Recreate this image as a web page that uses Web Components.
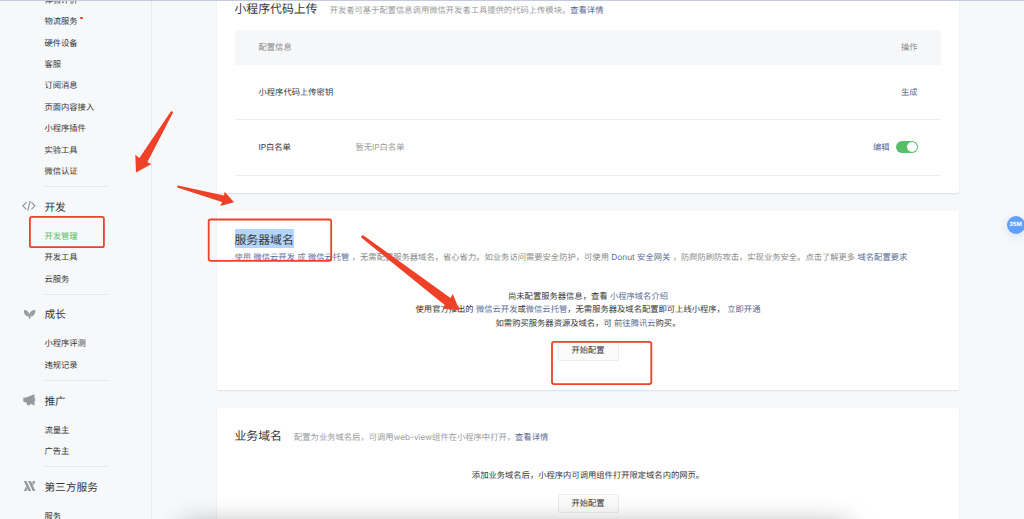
<!DOCTYPE html>
<html lang="zh-CN">
<head>
<meta charset="utf-8">
<title>开发管理</title>
<style>
html,body{margin:0;height:519px;overflow:hidden;background:#f6f8f9}
body{font:8.3px/14px Inter,"Noto Sans CJK SC",sans-serif;color:#353535;text-rendering:geometricPrecision}
</style>
</head>
<body>
<mp-app></mp-app>
<script>
const define = (name, html) => customElements.define(name, class extends HTMLElement {
  constructor() {
    super();
    const t = document.createElement('template');
    t.innerHTML = html;
    this.attachShadow({mode: 'open'}).append(t.content.cloneNode(true));
  }
});

define('nav-item', `<style>
:host{display:flex;align-items:center;box-sizing:border-box;height:21.4px;padding-top:1.6px;white-space:nowrap}
:host([active]){color:#5bc06b}
:host([dot])::after{content:"";width:2.6px;height:2.6px;border-radius:50%;background:#f0302a;margin:-8px 0 0 2.5px}
</style><slot></slot>`);

define('nav-group', `<style>
:host{display:block;padding:0 0 4.2px 44.4px}
header{display:flex;align-items:center;height:38.3px;margin-left:-23.700px}
.rule{width:65px;height:1px;background:#e8eaed}
.icon{width:23.7px;display:flex}
h3{margin:0;font:400 10.7px/16px Inter,"Noto Sans CJK SC",sans-serif;padding-top:3px;white-space:nowrap}
:host([plain]) header,:host([plain]) .rule{display:none}
</style><div class="rule"></div><header><span class="icon"><slot name="icon"></slot></span><h3><slot name="title"></slot></h3></header><slot></slot>`);

define('side-nav', `<style>
:host{display:block;box-sizing:border-box;width:152px;height:519px;border-right:1px solid #e8eaed;overflow:hidden}
.list{margin-top:-10.7px}
svg{width:16px;height:14px;display:block;overflow:visible}
</style><div class="list">
<nav-group plain><nav-item>体验评价</nav-item><nav-item dot>物流服务</nav-item><nav-item>硬件设备</nav-item><nav-item>客服</nav-item><nav-item>订阅消息</nav-item><nav-item>页面内容接入</nav-item><nav-item>小程序插件</nav-item><nav-item>实验工具</nav-item><nav-item>微信认证</nav-item></nav-group>
<nav-group><svg slot="icon" viewBox="0 0 16 14" fill="none" stroke="#8f9091" stroke-width="1.1"><path d="M5.400 3.200 1.900 6.800l3.500 3.600M10.400 3.200 13.900 6.800l-3.500 3.600M9.200 1.900 6.800 11.600"/></svg><span slot="title">开发</span><nav-item active>开发管理</nav-item><nav-item>开发工具</nav-item><nav-item>云服务</nav-item></nav-group>
<nav-group><svg slot="icon" viewBox="0 0 16 14" fill="#979899"><path d="M2.800 3c3 0 4.900 1.500 5.600 4.300C8.900 4.700 11 3 14.300 3c.1 3.700-1.400 6.200-4.700 6.500L9.100 12H8l-.3-2.500C4.500 9.200 2.800 7 2.800 3z"/><path d="M5.500 5.400 8.300 9.300M11.600 5.400 9 9.300" stroke="#c4c5c6" stroke-width=".5"/></svg><span slot="title">成长</span><nav-item>小程序评测</nav-item><nav-item>违规记录</nav-item></nav-group>
<nav-group><svg slot="icon" viewBox="0 0 16 14" fill="#979899"><path d="M2.300 4.700 5 4.500 13.500 1.200v11.200L9.300 10.700 8.600 12.600 6.200 12 5.500 9.500 2.300 8.800z"/><path d="M13.900 5.200v3.200" stroke="#979899" stroke-width=".8"/></svg><span slot="title">推广</span><nav-item>流量主</nav-item><nav-item>广告主</nav-item></nav-group>
<nav-group><svg slot="icon" viewBox="0 0 16 14" fill="#979899"><path d="M2.800 2h2.700l4.700 10H7.500zM7.200 2h2.700l4.500 10h-2.700zM5 7.600l1.300 2.700-.9 1.700H2.800zM12 2h2.400l-2 4.500-1.200-2.500z"/></svg><span slot="title">第三方服务</span><nav-item>服务</nav-item></nav-group>
</div>`);

define('text-link', `<style>:host{color:#576b95}</style><slot></slot>`);

define('mp-button', `<style>
:host{display:flex;align-items:center;justify-content:center;box-sizing:border-box;width:61px;height:19px;border:1px solid #ececec;border-radius:1.5px;background:#fbfbfb}
</style><slot></slot>`);

define('mp-switch', `<style>
:host{display:block;box-sizing:border-box;width:22px;height:12px;border-radius:6px;background:#58be6a;padding:1px;margin-top:-2px}
i{display:block;width:10px;height:10px;border-radius:50%;background:#fff;margin-left:auto}
</style><i></i>`);

define('mp-card', `<style>
:host{display:block;box-sizing:border-box;width:742px;background:#fff;border-radius:2px;box-shadow:0 1px 2px rgba(0,0,0,.1);padding:0 18px;white-space:nowrap}
</style><slot></slot>`);

define('card-title', `<style>
:host{display:flex;align-items:baseline;color:#9a9a9a;line-height:18px;margin-left:-.5px}
h2{margin:0 12px 0 0;font:400 11.88px/18px Inter,"Noto Sans CJK SC",sans-serif;color:#353535}
:host([selected]) h2{background:#b3d4fd;margin:0;line-height:17px;padding-top:2px}
</style><h2><slot name="title"></slot></h2><div><slot></slot></div>`);

define('table-row', `<style>
:host{display:flex;align-items:center;box-sizing:border-box;height:55.3px;padding:1px 23.5px 0;border-bottom:1px solid #ebedee}
:host([head]){height:35.5px;background:#f6f7f9;border:0;color:#888}
.name{width:97px}.value{flex:1;color:#9a9a9a}.ops{display:flex;gap:6px;align-items:center}
</style><div class="name"><slot name="name"></slot></div><div class="value"><slot></slot></div><div class="ops"><slot name="ops"></slot></div>`);

define('memory-badge', `<style>
:host{position:absolute;left:1006.5px;top:216px;width:18px;height:18px;border-radius:50%;background:#61a0f8;color:#fff;font:700 5.7px/18px Inter,sans-serif;text-align:center;box-shadow:0 2px 8px rgba(90,120,220,.2)}
</style><slot></slot>`);

define('mark-layer', `<style>
:host{position:absolute;left:0;top:0;width:1024px;height:519px;overflow:hidden;pointer-events:none}
svg{display:block;position:absolute;left:0;top:0}
.dock{position:absolute;left:182px;top:527px;width:667px;height:40px;box-shadow:0 0 28px rgba(0,0,0,.4)}
.top{height:1px;background:#c3cbdc}
</style><div class="top"></div><div class="dock"></div>
<svg width="1024" height="519" viewBox="0 0 1024 519">
<g fill="none" stroke="#eb4228" stroke-width="1.8"><rect x="29.900" y="216.900" width="74" height="30.300" rx="2"/><rect x="208.700" y="219.500" width="122.500" height="41.300" rx="2"/><rect x="552" y="341.800" width="99.300" height="42.300" rx="2"/></g>
<g fill="#ee4127"><path d="M170.300 112.200q.8-1.500 2.200-.8.900.5.300 1.700L147.300 162.300l4.200 1.700L136 172.500l-.7-17.700 4.100 3.200z"/><path d="M177.300 187.500q-.8-1.500.7-1.900L224 195.500l.7-3.800L234 202.300 220.300 206l1.700-4z"/><path d="M361.200 237.500q-.3-2.300 2-2.300L450.500 298l2.300-4L459.500 310.300 443 308.500l2.300-3z"/></g>
</svg>`);

define('mp-app', `<style>
:host{display:block;position:relative;width:1024px;height:519px;overflow:hidden}
.page{display:flex;height:519px}
main{margin-left:65px;display:flex;flex-direction:column;gap:18px}
mp-card{flex:none}
.upload{height:193px}
.upload card-title{height:29.5px}
.server{height:179px;padding-top:18px}
.biz{height:140px;padding-top:19px}
.desc{color:#888;line-height:16px;margin:2px 0 0 -.5px;letter-spacing:0}
.info{text-align:center;line-height:13.2px;margin-top:25.2px}
.server mp-button{margin:11px auto 0}
.biz .info{line-height:14px;margin-top:22px}
.biz mp-button{margin:11px auto 0}
</style>
<div class="page"><side-nav></side-nav><main>
<mp-card class="upload"><card-title><span slot="title">小程序代码上传</span>开发者可基于配置信息调用微信开发者工具提供的代码上传模块。<text-link>查看详情</text-link></card-title>
<table-row head><span slot="name">配置信息</span><span slot="ops">操作</span></table-row>
<table-row><span slot="name">小程序代码上传密钥</span><text-link slot="ops">生成</text-link></table-row>
<table-row><span slot="name">IP白名单</span>暂无IP白名单<text-link slot="ops">编辑</text-link><mp-switch slot="ops"></mp-switch></table-row></mp-card>
<mp-card class="server"><card-title selected><span slot="title">服务器域名</span></card-title>
<div class="desc">使用 <text-link>微信云开发</text-link> 或 <text-link>微信云托管</text-link> ，无需配置服务器域名，省心省力。如业务访问需要安全防护，可使用 <text-link>Donut 安全网关</text-link> ，防爬防刷防攻击，实现业务安全。点击了解更多 <text-link>域名配置要求</text-link></div>
<div class="info">尚未配置服务器信息，查看 <text-link>小程序域名介绍</text-link><br>使用官方推出的 <text-link>微信云开发</text-link>或<text-link>微信云托管</text-link>，无需服务器及域名配置即可上线小程序， <text-link>立即开通</text-link><br>如需购买服务器资源及域名，可 <text-link>前往腾讯云</text-link>购买。</div>
<mp-button>开始配置</mp-button></mp-card>
<mp-card class="biz"><card-title><span slot="title">业务域名</span>配置为业务域名后，可调用web-view组件在小程序中打开，<text-link>查看详情</text-link></card-title>
<div class="info">添加业务域名后，小程序内可调用组件打开限定域名内的网页。</div>
<mp-button>开始配置</mp-button></mp-card>
</main></div>
<memory-badge>35M</memory-badge>
<mark-layer></mark-layer>`);
</script>
</body>
</html>
